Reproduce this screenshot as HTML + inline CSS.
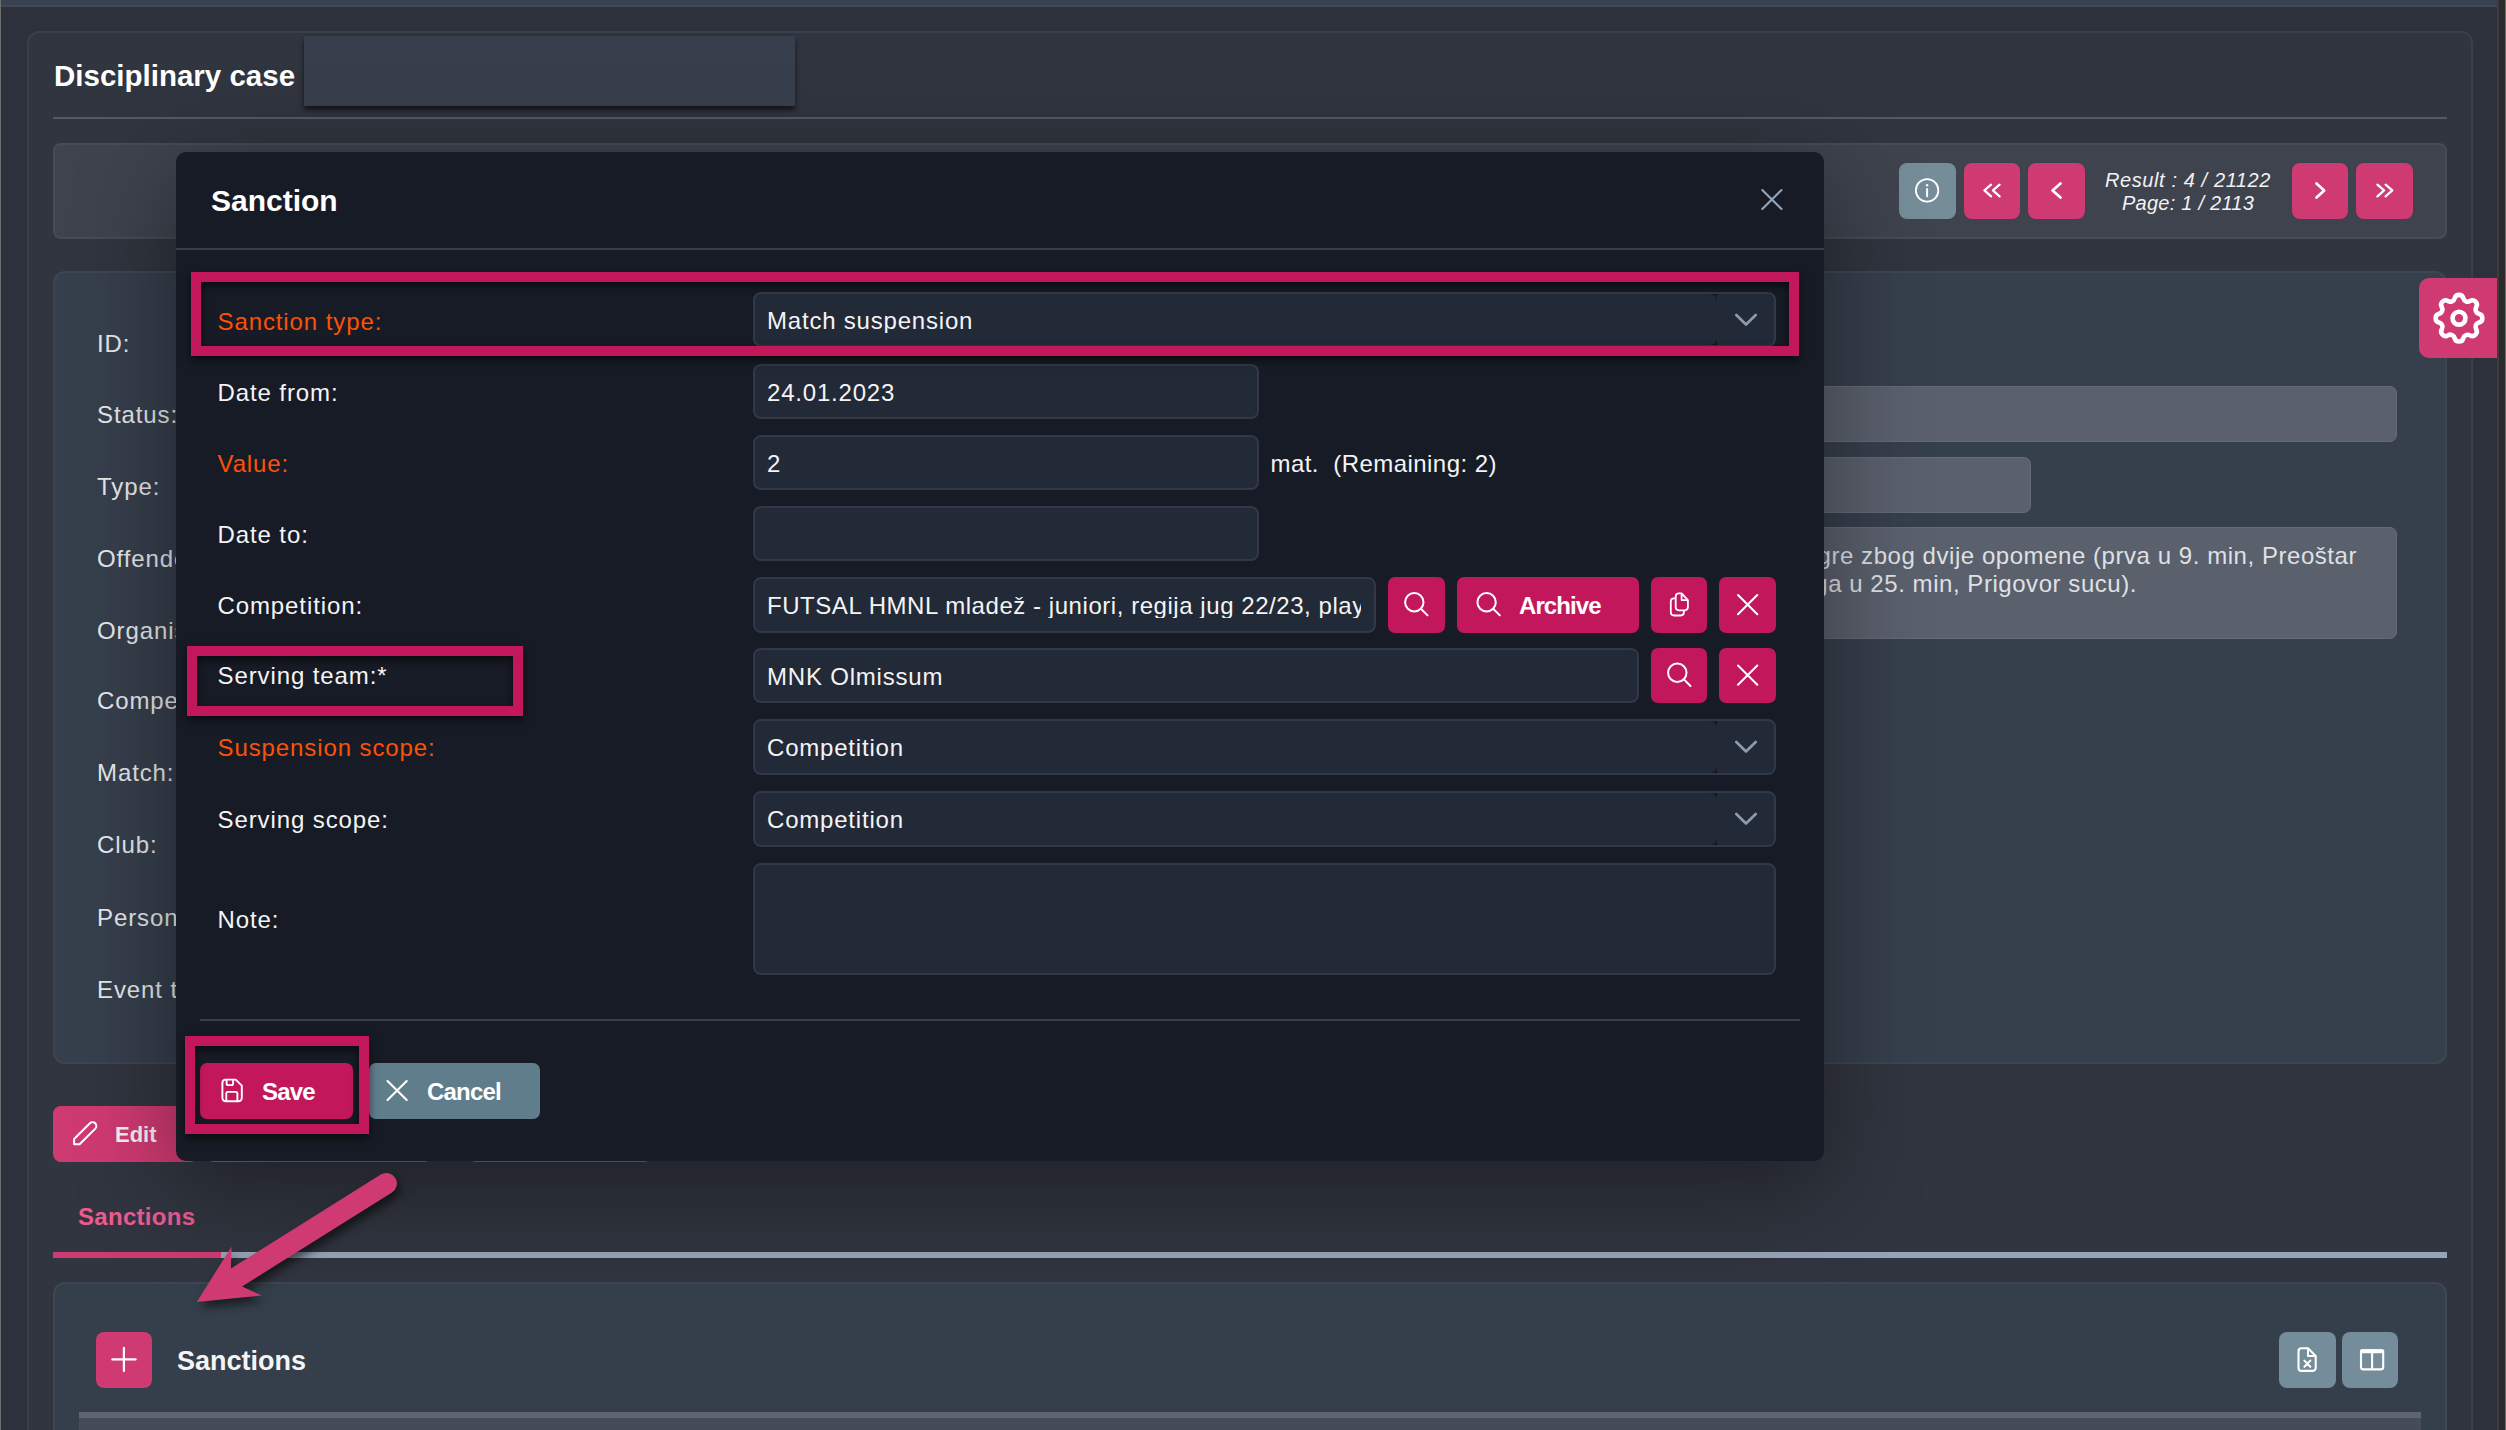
<!DOCTYPE html>
<html><head><meta charset="utf-8"><style>
html,body{margin:0;padding:0;}
body{width:2506px;height:1430px;position:relative;overflow:hidden;background:#2d313c;font-family:"Liberation Sans",sans-serif;}
.a{position:absolute;}
.t{white-space:pre;}
</style></head><body>
<div class="a" style="left:0px;top:0px;width:2506px;height:7px;background:#39424f;border-bottom:2px solid #444b57;box-sizing:border-box;"></div>
<div class="a" style="left:0px;top:0px;width:1px;height:1430px;background:#6e6e6e;"></div>
<div class="a" style="left:2497px;top:0px;width:9px;height:1430px;background:#2b2b2b;border-left:2px solid #3c3c3c;border-right:1px solid #6e6e6e;box-sizing:border-box;"></div>
<div class="a" style="left:27px;top:31px;width:2446px;height:1469px;background:#31353f;border:2px solid #3b3f48;border-radius:12px;box-sizing:border-box;"></div>
<div class="a t" style="left:54px;top:61.0px;font-size:29.5px;line-height:29.5px;color:#ffffff;font-weight:700;letter-spacing:0px;">Disciplinary case</div>
<div class="a" style="left:304px;top:36px;width:491px;height:70px;background:#373f4c;box-shadow:0 4px 5px rgba(0,0,0,0.62);"></div>
<div class="a" style="left:53px;top:117px;width:2394px;height:2px;background:#545964;"></div>
<div class="a" style="left:53px;top:143px;width:2394px;height:96px;background:#3f434e;border:2px solid #474b55;border-radius:8px;box-sizing:border-box;"></div>
<div class="a" style="left:1899px;top:163px;width:57px;height:56px;background:#758c99;border-radius:8px;"></div>
<div class="a" style="left:1964px;top:163px;width:56px;height:56px;background:#cf3a72;border-radius:8px;"></div>
<div class="a" style="left:2028px;top:163px;width:57px;height:56px;background:#cf3a72;border-radius:8px;"></div>
<div class="a" style="left:2292px;top:163px;width:56px;height:56px;background:#cf3a72;border-radius:8px;"></div>
<div class="a" style="left:2356px;top:163px;width:57px;height:56px;background:#cf3a72;border-radius:8px;"></div>
<div class="a t" style="left:2088px;width:200px;text-align:center;top:170.4px;font-size:20px;line-height:20px;color:#f2f2f3;font-style:italic;letter-spacing:0.6px;">Result : 4 / 21122</div>
<div class="a t" style="left:2088px;width:200px;text-align:center;top:193.1px;font-size:20px;line-height:20px;color:#f2f2f3;font-style:italic;letter-spacing:0.25px;">Page: 1 / 2113</div>
<div class="a" style="left:53px;top:271px;width:2394px;height:793px;background:#363f4c;border:2px solid #3f4652;border-radius:12px;box-sizing:border-box;"></div>
<div class="a t" style="left:97px;top:331.7px;font-size:24px;line-height:24px;color:#e6e8eb;font-weight:400;letter-spacing:0.9px;">ID:</div>
<div class="a t" style="left:97px;top:402.7px;font-size:24px;line-height:24px;color:#e6e8eb;font-weight:400;letter-spacing:0.9px;">Status:</div>
<div class="a t" style="left:97px;top:474.7px;font-size:24px;line-height:24px;color:#e6e8eb;font-weight:400;letter-spacing:0.9px;">Type:</div>
<div class="a t" style="left:97px;top:546.7px;font-size:24px;line-height:24px;color:#e6e8eb;font-weight:400;letter-spacing:0.9px;">Offenders:</div>
<div class="a t" style="left:97px;top:618.7px;font-size:24px;line-height:24px;color:#e6e8eb;font-weight:400;letter-spacing:0.9px;">Organisation:</div>
<div class="a t" style="left:97px;top:688.7px;font-size:24px;line-height:24px;color:#e6e8eb;font-weight:400;letter-spacing:0.9px;">Competition:</div>
<div class="a t" style="left:97px;top:760.7px;font-size:24px;line-height:24px;color:#e6e8eb;font-weight:400;letter-spacing:0.9px;">Match:</div>
<div class="a t" style="left:97px;top:832.7px;font-size:24px;line-height:24px;color:#e6e8eb;font-weight:400;letter-spacing:0.9px;">Club:</div>
<div class="a t" style="left:97px;top:905.7px;font-size:24px;line-height:24px;color:#e6e8eb;font-weight:400;letter-spacing:0.9px;">Person:</div>
<div class="a t" style="left:97px;top:977.7px;font-size:24px;line-height:24px;color:#e6e8eb;font-weight:400;letter-spacing:0.9px;">Event type:</div>
<div class="a" style="left:1700px;top:386px;width:697px;height:56px;background:#5a606c;border:1px solid #646a76;border-radius:7px;box-sizing:border-box;"></div>
<div class="a" style="left:1700px;top:457px;width:331px;height:56px;background:#5a606c;border:1px solid #646a76;border-radius:7px;box-sizing:border-box;"></div>
<div class="a" style="left:1700px;top:527px;width:697px;height:112px;background:#5a606c;border:1px solid #646a76;border-radius:7px;box-sizing:border-box;"></div>
<div class="a t" style="right:149px;top:544.2px;font-size:24px;line-height:24px;color:#dfe1e5;letter-spacing:0.55px;">prekršaj: Isključenje iz igre zbog dvije opomene (prva u 9. min, Preoštar</div>
<div class="a t" style="right:369px;top:571.5px;font-size:24px;line-height:24px;color:#dfe1e5;letter-spacing:0.55px;">prigovor sucu, druga u 25. min, Prigovor sucu).</div>
<div class="a" style="left:2419px;top:278px;width:78px;height:80px;background:#cf3a72;border-radius:10px 0 0 10px;"></div>
<div class="a" style="left:53px;top:1106px;width:145px;height:56px;background:#cf3a72;border-radius:8px;"></div>
<div class="a t" style="left:115px;top:1124.4px;font-size:22px;line-height:22px;color:#f3f3f3;font-weight:700;letter-spacing:0px;">Edit</div>
<div class="a t" style="left:78px;top:1205.2px;font-size:24px;line-height:24px;color:#ee5b92;font-weight:700;letter-spacing:0.3px;">Sanctions</div>
<div class="a" style="left:53px;top:1252px;width:168px;height:6px;background:#cf3a72;"></div>
<div class="a" style="left:221px;top:1252px;width:2226px;height:6px;background:#95a4b8;"></div>
<div class="a" style="left:53px;top:1282px;width:2394px;height:218px;background:#353f4b;border:2px solid #3f4652;border-radius:12px;box-sizing:border-box;"></div>
<div class="a" style="left:96px;top:1332px;width:56px;height:56px;background:#cf3a72;border-radius:8px;"></div>
<div class="a t" style="left:177px;top:1348.1px;font-size:27px;line-height:27px;color:#f4f4f5;font-weight:700;letter-spacing:0px;">Sanctions</div>
<div class="a" style="left:2279px;top:1332px;width:57px;height:56px;background:#758d9a;border-radius:8px;"></div>
<div class="a" style="left:2342px;top:1332px;width:56px;height:56px;background:#758d9a;border-radius:8px;"></div>
<div class="a" style="left:79px;top:1412px;width:2342px;height:6px;background:#5e6470;"></div>
<div class="a" style="left:79px;top:1418px;width:2342px;height:12px;background:#454b57;"></div>
<div class="a" style="left:210px;top:1159px;width:218px;height:3px;background:#cf3a72;border-radius:0 0 4px 4px;"></div>
<div class="a" style="left:472px;top:1159px;width:176px;height:3px;background:#cf3a72;border-radius:0 0 4px 4px;"></div>
<div class="a" style="left:176px;top:152px;width:1648px;height:1009px;background:#171b25;border-radius:10px;box-shadow:0 24px 100px rgba(0,0,0,0.42);"></div>
<div class="a t" style="left:211px;top:185.6px;font-size:30px;line-height:30px;color:#ffffff;font-weight:700;letter-spacing:0px;">Sanction</div>
<div class="a" style="left:176px;top:248px;width:1648px;height:2px;background:#3a3e47;"></div>
<div class="a t" style="left:217.5px;top:309.7px;font-size:24px;line-height:24px;color:#fb5207;font-weight:400;letter-spacing:0.9px;">Sanction type:</div>
<div class="a t" style="left:217.5px;top:381.0px;font-size:24px;line-height:24px;color:#f4f4f5;font-weight:400;letter-spacing:0.9px;">Date from:</div>
<div class="a t" style="left:217.5px;top:452.1px;font-size:24px;line-height:24px;color:#fb5207;font-weight:400;letter-spacing:0.9px;">Value:</div>
<div class="a t" style="left:217.5px;top:523.1px;font-size:24px;line-height:24px;color:#f4f4f5;font-weight:400;letter-spacing:0.9px;">Date to:</div>
<div class="a t" style="left:217.5px;top:594.2px;font-size:24px;line-height:24px;color:#f4f4f5;font-weight:400;letter-spacing:0.9px;">Competition:</div>
<div class="a t" style="left:217.5px;top:664.0px;font-size:24px;line-height:24px;color:#f4f4f5;font-weight:400;letter-spacing:0.9px;">Serving team:*</div>
<div class="a t" style="left:217.5px;top:736.1px;font-size:24px;line-height:24px;color:#fb5207;font-weight:400;letter-spacing:0.9px;">Suspension scope:</div>
<div class="a t" style="left:217.5px;top:807.7px;font-size:24px;line-height:24px;color:#f4f4f5;font-weight:400;letter-spacing:0.9px;">Serving scope:</div>
<div class="a t" style="left:217.5px;top:908.1px;font-size:24px;line-height:24px;color:#f4f4f5;font-weight:400;letter-spacing:0.9px;">Note:</div>
<div class="a" style="left:753px;top:292px;width:1023px;height:55px;background:#222937;border:2px solid #323845;border-radius:8px;box-sizing:border-box;"></div>
<div class="a t" style="left:767px;top:308.9px;font-size:24px;line-height:24px;color:#f4f4f5;font-weight:400;letter-spacing:0.8px;max-width:994px;overflow:hidden;">Match suspension</div>
<div class="a" style="left:1711px;top:294px;width:6px;height:51px;background:#151920;"></div>
<div class="a" style="left:1700px;top:294px;width:17px;height:51px;background:#222937;border-radius:0 7px 7px 0;"></div>
<div class="a" style="left:1717px;top:294px;width:13px;height:51px;background:#222937;"></div>
<svg class="a" style="left:1730px;top:307.5px" width="32" height="24" viewBox="0 0 32 24"><path d="M6.3 7 L16 16.5 L25.7 7" fill="none" stroke="#8d9bb0" stroke-width="2.7" stroke-linecap="round" stroke-linejoin="round"/></svg>
<div class="a" style="left:753px;top:364px;width:506px;height:55px;background:#222937;border:2px solid #323845;border-radius:8px;box-sizing:border-box;"></div>
<div class="a t" style="left:767px;top:380.9px;font-size:24px;line-height:24px;color:#f4f4f5;font-weight:400;letter-spacing:0.8px;max-width:477px;overflow:hidden;">24.01.2023</div>
<div class="a" style="left:753px;top:435px;width:506px;height:55px;background:#222937;border:2px solid #323845;border-radius:8px;box-sizing:border-box;"></div>
<div class="a t" style="left:767px;top:451.9px;font-size:24px;line-height:24px;color:#f4f4f5;font-weight:400;letter-spacing:0.8px;max-width:477px;overflow:hidden;">2</div>
<div class="a t" style="left:1270.5px;top:452.1px;font-size:24px;line-height:24px;color:#f4f4f5;font-weight:400;letter-spacing:0.45px;">mat.&nbsp; (Remaining: 2)</div>
<div class="a" style="left:753px;top:506px;width:506px;height:55px;background:#222937;border:2px solid #323845;border-radius:8px;box-sizing:border-box;"></div>
<div class="a" style="left:753px;top:577px;width:623px;height:56px;background:#222937;border:2px solid #323845;border-radius:8px;box-sizing:border-box;"></div>
<div class="a t" style="left:767px;top:593.9px;font-size:24px;line-height:24px;color:#f4f4f5;font-weight:400;letter-spacing:0.55px;max-width:594px;overflow:hidden;">FUTSAL HMNL mladež - juniori, regija jug 22/23, play-off</div>
<div class="a" style="left:753px;top:648px;width:886px;height:55px;background:#222937;border:2px solid #323845;border-radius:8px;box-sizing:border-box;"></div>
<div class="a t" style="left:767px;top:664.9px;font-size:24px;line-height:24px;color:#f4f4f5;font-weight:400;letter-spacing:0.8px;max-width:857px;overflow:hidden;">MNK Olmissum</div>
<div class="a" style="left:753px;top:719px;width:1023px;height:56px;background:#222937;border:2px solid #323845;border-radius:8px;box-sizing:border-box;"></div>
<div class="a t" style="left:767px;top:735.9px;font-size:24px;line-height:24px;color:#f4f4f5;font-weight:400;letter-spacing:0.8px;max-width:994px;overflow:hidden;">Competition</div>
<div class="a" style="left:1711px;top:721px;width:6px;height:52px;background:#151920;"></div>
<div class="a" style="left:1700px;top:721px;width:17px;height:52px;background:#222937;border-radius:0 7px 7px 0;"></div>
<div class="a" style="left:1717px;top:721px;width:13px;height:52px;background:#222937;"></div>
<svg class="a" style="left:1730px;top:735.0px" width="32" height="24" viewBox="0 0 32 24"><path d="M6.3 7 L16 16.5 L25.7 7" fill="none" stroke="#8d9bb0" stroke-width="2.7" stroke-linecap="round" stroke-linejoin="round"/></svg>
<div class="a" style="left:753px;top:791px;width:1023px;height:56px;background:#222937;border:2px solid #323845;border-radius:8px;box-sizing:border-box;"></div>
<div class="a t" style="left:767px;top:807.9px;font-size:24px;line-height:24px;color:#f4f4f5;font-weight:400;letter-spacing:0.8px;max-width:994px;overflow:hidden;">Competition</div>
<div class="a" style="left:1711px;top:793px;width:6px;height:52px;background:#151920;"></div>
<div class="a" style="left:1700px;top:793px;width:17px;height:52px;background:#222937;border-radius:0 7px 7px 0;"></div>
<div class="a" style="left:1717px;top:793px;width:13px;height:52px;background:#222937;"></div>
<svg class="a" style="left:1730px;top:807.0px" width="32" height="24" viewBox="0 0 32 24"><path d="M6.3 7 L16 16.5 L25.7 7" fill="none" stroke="#8d9bb0" stroke-width="2.7" stroke-linecap="round" stroke-linejoin="round"/></svg>
<div class="a" style="left:753px;top:863px;width:1023px;height:112px;background:#222937;border:2px solid #323845;border-radius:8px;box-sizing:border-box;"></div>
<div class="a" style="left:1388px;top:577px;width:57px;height:56px;background:#c2185b;border-radius:7px;"></div>
<div class="a" style="left:1457px;top:577px;width:182px;height:56px;background:#c2185b;border-radius:7px;"></div>
<div class="a" style="left:1651px;top:577px;width:56px;height:56px;background:#c2185b;border-radius:7px;"></div>
<div class="a" style="left:1719px;top:577px;width:57px;height:56px;background:#c2185b;border-radius:7px;"></div>
<div class="a" style="left:1651px;top:648px;width:56px;height:55px;background:#c2185b;border-radius:7px;"></div>
<div class="a" style="left:1719px;top:648px;width:57px;height:55px;background:#c2185b;border-radius:7px;"></div>
<div class="a t" style="left:1519px;top:593.7px;font-size:24px;line-height:24px;color:#ffffff;font-weight:700;letter-spacing:-0.9px;">Archive</div>
<div class="a" style="left:200px;top:1019px;width:1600px;height:2px;background:#3a3e47;"></div>
<div class="a" style="left:200px;top:1063px;width:153px;height:56px;background:#c2185b;border-radius:7px;"></div>
<div class="a" style="left:369px;top:1063px;width:171px;height:56px;background:#607d8b;border-radius:7px;"></div>
<div class="a t" style="left:262px;top:1080.2px;font-size:24px;line-height:24px;color:#ffffff;font-weight:700;letter-spacing:-0.8px;">Save</div>
<div class="a t" style="left:427px;top:1080.2px;font-size:24px;line-height:24px;color:#ffffff;font-weight:700;letter-spacing:-0.8px;">Cancel</div>
<svg class="a" style="left:0;top:0;filter:drop-shadow(3px 6px 5px rgba(0,0,0,0.55));" width="2506" height="1430" viewBox="0 0 2506 1430"><path d="M380.8 1174.6 L230.9 1268.5 L231.5 1246.7 L196.8 1301.9 L261.7 1295.4 L242.1 1286.4 L392 1192.4 A10.5 10.5 0 0 0 380.8 1174.6 Z" fill="#cf3a72"/></svg>
<div class="a" style="left:191px;top:272px;width:1608px;height:84px;background:transparent;border:10px solid #c2185b;box-sizing:border-box;box-shadow:0 4px 8px rgba(0,0,0,0.6), inset 0 4px 8px rgba(0,0,0,0.6);"></div>
<div class="a" style="left:187px;top:646px;width:336px;height:70px;background:transparent;border:10px solid #c2185b;box-sizing:border-box;box-shadow:0 4px 8px rgba(0,0,0,0.6), inset 0 4px 8px rgba(0,0,0,0.6);"></div>
<div class="a" style="left:185px;top:1036px;width:184px;height:98px;background:transparent;border:10px solid #c2185b;box-sizing:border-box;box-shadow:0 4px 8px rgba(0,0,0,0.6), inset 0 4px 8px rgba(0,0,0,0.6);"></div>
<svg class="a" style="left:0;top:0" width="2506" height="1430" viewBox="0 0 2506 1430"><circle cx="1927.1" cy="190.4" r="11.2" fill="none" stroke="#ffffff" stroke-width="1.8"/><circle cx="1927.1" cy="185.3" r="1.2" fill="#ffffff"/><line x1="1927.1" y1="189" x2="1927.1" y2="196.3" stroke="#ffffff" stroke-width="2" stroke-linecap="round"/><polyline points="1991.1,184.6 1984.4,190.4 1991.1,196.4" fill="none" stroke="#ffffff" stroke-width="2.2" stroke-linecap="round" stroke-linejoin="round"/><polyline points="1999.6,184.6 1992.9,190.4 1999.6,196.4" fill="none" stroke="#ffffff" stroke-width="2.2" stroke-linecap="round" stroke-linejoin="round"/><polyline points="2060.5,183.5 2052.5,190.4 2060.5,197.6" fill="none" stroke="#ffffff" stroke-width="2.7" stroke-linecap="round" stroke-linejoin="round"/><polyline points="2316.5,183.5 2324.2,190.4 2316.5,197.6" fill="none" stroke="#ffffff" stroke-width="2.7" stroke-linecap="round" stroke-linejoin="round"/><polyline points="2377.4,184.6 2384.1,190.4 2377.4,196.4" fill="none" stroke="#ffffff" stroke-width="2.2" stroke-linecap="round" stroke-linejoin="round"/><polyline points="2385.6,184.6 2392.3,190.4 2385.6,196.4" fill="none" stroke="#ffffff" stroke-width="2.2" stroke-linecap="round" stroke-linejoin="round"/><g transform="translate(2427.872 287.072) scale(2.594)"><path d="M10.325 4.317c.426 -1.756 2.924 -1.756 3.35 0a1.724 1.724 0 0 0 2.573 1.066c1.543 -.94 3.31 .826 2.37 2.37a1.724 1.724 0 0 0 1.065 2.572c1.756 .426 1.756 2.924 0 3.35a1.724 1.724 0 0 0 -1.066 2.573c.94 1.543 -.826 3.310 -2.37 2.37a1.724 1.724 0 0 0 -2.572 1.065c-.426 1.756 -2.924 1.756 -3.35 0a1.724 1.724 0 0 0 -2.573 -1.066c-1.543 .94 -3.31 -.826 -2.37 -2.37a1.724 1.724 0 0 0 -1.065 -2.572c-1.756 -.426 -1.756 -2.924 0 -3.35a1.724 1.724 0 0 0 1.066 -2.573c-.94 -1.543 .826 -3.31 2.37 -2.37c1 .608 2.296 .07 2.572 -1.065z" fill="none" stroke="#fff" stroke-width="1.77"/></g><circle cx="2459" cy="318.2" r="6.45" fill="none" stroke="#ffffff" stroke-width="4.6"/><circle cx="1414.3" cy="602.2" r="9.2" fill="none" stroke="#ffffff" stroke-width="2"/><line x1="1420.8999999999999" y1="608.8000000000001" x2="1427.5" y2="615.4000000000001" stroke="#ffffff" stroke-width="2" stroke-linecap="round"/><circle cx="1486.6" cy="602.2" r="9.2" fill="none" stroke="#ffffff" stroke-width="2"/><line x1="1493.1999999999998" y1="608.8000000000001" x2="1499.8" y2="615.4000000000001" stroke="#ffffff" stroke-width="2" stroke-linecap="round"/><circle cx="1677.3" cy="672.8" r="9.2" fill="none" stroke="#ffffff" stroke-width="2"/><line x1="1683.8999999999999" y1="679.4" x2="1690.5" y2="686.0" stroke="#ffffff" stroke-width="2" stroke-linecap="round"/><path d="M1738 595L1757.3 614.3M1757.3 595L1738 614.3" stroke="#ffffff" stroke-width="2" stroke-linecap="round"/><path d="M1738 665.5L1757.3 684.8M1757.3 665.5L1738 684.8" stroke="#ffffff" stroke-width="2" stroke-linecap="round"/><path d="M1762.3 190L1781.5 209M1781.5 190L1762.3 209" stroke="#94a4ba" stroke-width="2.1" stroke-linecap="round"/><path d="M387.5 1081L406.7 1100M406.7 1081L387.5 1100" stroke="#ffffff" stroke-width="2.1" stroke-linecap="round"/><path d="M1681.6 593.4 H1678.9 A3.2 3.2 0 0 0 1675.7 596.6 V607.1 A3.2 3.2 0 0 0 1678.9 610.3 H1684.7 A3.2 3.2 0 0 0 1687.9 607.1 V600.1 L1681.6 593.4 Z M1681.6 593.4 V600.1 H1687.9" fill="none" stroke="#ffffff" stroke-width="1.8" stroke-linejoin="round"/><path d="M1675.7 598.4 H1674 A3.2 3.2 0 0 0 1670.8 601.6 V612.3 A3.2 3.2 0 0 0 1674 615.5 H1680.7 A3.2 3.2 0 0 0 1683.9 612.3 V610.3" fill="none" stroke="#ffffff" stroke-width="1.8" stroke-linejoin="round"/><path d="M235.7 1079.6 H225.6 A3.2 3.2 0 0 0 222.4 1082.8 V1098.1 A3.2 3.2 0 0 0 225.6 1101.3 H238.6 A3.2 3.2 0 0 0 241.8 1098.1 V1085.6 Z" fill="none" stroke="#ffffff" stroke-width="1.9" stroke-linejoin="round"/><path d="M226.6 1079.6 V1083.5 A1.6 1.6 0 0 0 228.2 1085.1 H231.5 A1.6 1.6 0 0 0 233.1 1083.5 V1079.6" fill="none" stroke="#ffffff" stroke-width="1.9"/><path d="M226.3 1101.3 V1093.5 A1.6 1.6 0 0 1 227.9 1091.9 H235.8 A1.6 1.6 0 0 1 237.4 1093.5 V1101.3" fill="none" stroke="#ffffff" stroke-width="1.9"/><path d="M74.1 1139 L89.9 1123.2 A3.82 3.82 0 0 1 95.3 1128.6 L79.6 1144.3 L74.1 1144.3 Z" fill="none" stroke="#ffffff" stroke-width="2" stroke-linejoin="round"/><path d="M112.3 1359.4 H135.6 M123.9 1347.9 V1371.1" stroke="#ffffff" stroke-width="2.2" stroke-linecap="round"/><path d="M2308 1348.3 H2301.5 A3 3 0 0 0 2298.5 1351.3 V1367.9 A3 3 0 0 0 2301.5 1370.9 H2312.7 A3 3 0 0 0 2315.7 1367.9 V1356 Z M2308 1348.3 V1356 H2315.7" fill="none" stroke="#ffffff" stroke-width="2.1" stroke-linejoin="round"/><path d="M2304.4 1360.6L2310.3 1366.8M2310.3 1360.6L2304.4 1366.8" stroke="#ffffff" stroke-width="2.1" stroke-linecap="round"/><rect x="2361" y="1350.4" width="22.2" height="19" rx="2.5" fill="none" stroke="#ffffff" stroke-width="2.1"/><rect x="2360" y="1349.3" width="24.2" height="3.9" rx="1.5" fill="#ffffff"/><line x1="2372.1" y1="1352" x2="2372.1" y2="1369.4" stroke="#ffffff" stroke-width="2.1"/></svg>
</body></html>
